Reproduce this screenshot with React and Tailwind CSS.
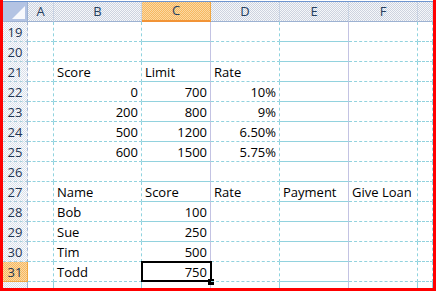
const cols = ['A', 'B', 'C', 'D', 'E', 'F', ''];
const widths = 'grid-cols-[25px_26px_88px_69px_69px_69px_69px_15px]';

// [B, C, D, E, F] per row; numbers right-aligned
const rows = {
  19: [],
  20: [],
  21: ['Score', 'Limit', 'Rate'],
  22: [0, 700, '10%'],
  23: [200, 800, '9%'],
  24: [500, 1200, '6.50%'],
  25: [600, 1500, '5.75%'],
  26: [],
  27: ['Name', 'Score', 'Rate', 'Payment', 'Give Loan'],
  28: ['Bob', 100],
  29: ['Sue', 250],
  30: ['Tim', 500],
  31: ['Todd', 750],
};

const isRight = (v) => typeof v === 'number' || /%$/.test(String(v));

const headPattern =
  'bg-[repeating-conic-gradient(#cdd3df_0%_25%,#f5f7fa_0%_50%)] bg-[length:2px_2px]';
const rowHeadPattern =
  'bg-[repeating-conic-gradient(#d9dfea_0%_25%,#fbfcfd_0%_50%)] bg-[length:2px_2px]';
const orangePattern =
  'bg-[repeating-conic-gradient(#f6b861_0%_25%,#fcd9a4_0%_50%)] bg-[length:2px_2px]';

// solid lavender after C and E, dashed cyan elsewhere
const vline = (i) =>
  i === 2 || i === 4
    ? 'border-r border-solid border-r-[#c3c3e3]'
    : 'border-r border-dashed border-r-[#8fd3df]';

function Cell({ value, ci, selected }) {
  const right = isRight(value);
  return (
    <div
      className={`relative h-[20px] border-b border-dashed border-b-[#92d2de] ${vline(ci)} flex items-end pb-[1px] px-[3px] ${
        right ? 'justify-end' : 'justify-start'
      }`}
    >
      <span className="leading-[16px] whitespace-nowrap">{value ?? ''}</span>
      {selected && (
        <>
          <div className="absolute -left-[1px] -top-[1px] w-[71px] h-[21px] border-2 border-black pointer-events-none" />
          <div className="absolute -right-[4px] -bottom-[4px] w-[6px] h-[6px] bg-black" />
        </>
      )}
    </div>
  );
}

export default function App() {
  return (
    <div
      className="w-[436px] h-[291px] bg-white overflow-hidden border-l-[3px] border-r-[3px] border-b-[3px] border-[#ff0000] pt-[1px] text-[13px] text-black"
      style={{ fontFamily: '"Open Sans", "Noto Sans", sans-serif' }}
    >
      {/* column headers */}
      <div className={`grid ${widths} h-[21px] border-t border-t-[#6e95cf]`}>
        <div className="h-[20px] bg-[#b3c3e3] border-r border-b border-[#9db2d2] flex items-end justify-end p-[2px]">
          <svg width="13" height="13" viewBox="0 0 13 13">
            <path d="M13 0 L13 13 L0 13 Z" fill="#ffffff" opacity="0.9" />
          </svg>
        </div>
        {cols.map((c, i) =>
          c === 'C' ? (
            <div
              key={i}
              className={`h-[20px] ${orangePattern} border-r border-r-[#f0a843] border-b-2 border-b-[#f29436] flex items-center justify-center text-[#27415f]`}
            >
              {c}
            </div>
          ) : (
            <div
              key={i}
              className={`h-[20px] ${headPattern} border-r border-r-[#c9d3e3] border-b border-b-[#9db2d2] flex items-center justify-center text-[#27415f]`}
            >
              {c}
            </div>
          )
        )}
      </div>

      {/* rows */}
      {Object.entries(rows).map(([n, vals]) => {
        const num = Number(n);
        const sel = num === 31;
        return (
          <div key={n} className={`grid ${widths}`}>
            <div
              className={`h-[20px] flex items-end justify-center pb-[1px] text-[#1f3553] ${
                sel
                  ? `${orangePattern} border-r border-b border-[#f0a843]`
                  : `${rowHeadPattern} border-r border-r-[#9db2d2] border-b border-dashed border-b-[#a6cedb]`
              }`}
            >
              <span className="leading-[16px]">{n}</span>
            </div>
            <Cell ci={0} />
            {[0, 1, 2, 3, 4].map((k) => (
              <Cell key={k} ci={k + 1} value={vals[k]} selected={sel && k === 1} />
            ))}
            <Cell ci={6} />
          </div>
        );
      })}

      {/* partial row 32 */}
      <div className={`grid ${widths} h-[6px]`}>
        <div className={`${rowHeadPattern} border-r border-r-[#9db2d2]`} />
        {[0, 1, 2, 3, 4, 5, 6].map((k) => (
          <div key={k} className={vline(k)} />
        ))}
      </div>
    </div>
  );
}
